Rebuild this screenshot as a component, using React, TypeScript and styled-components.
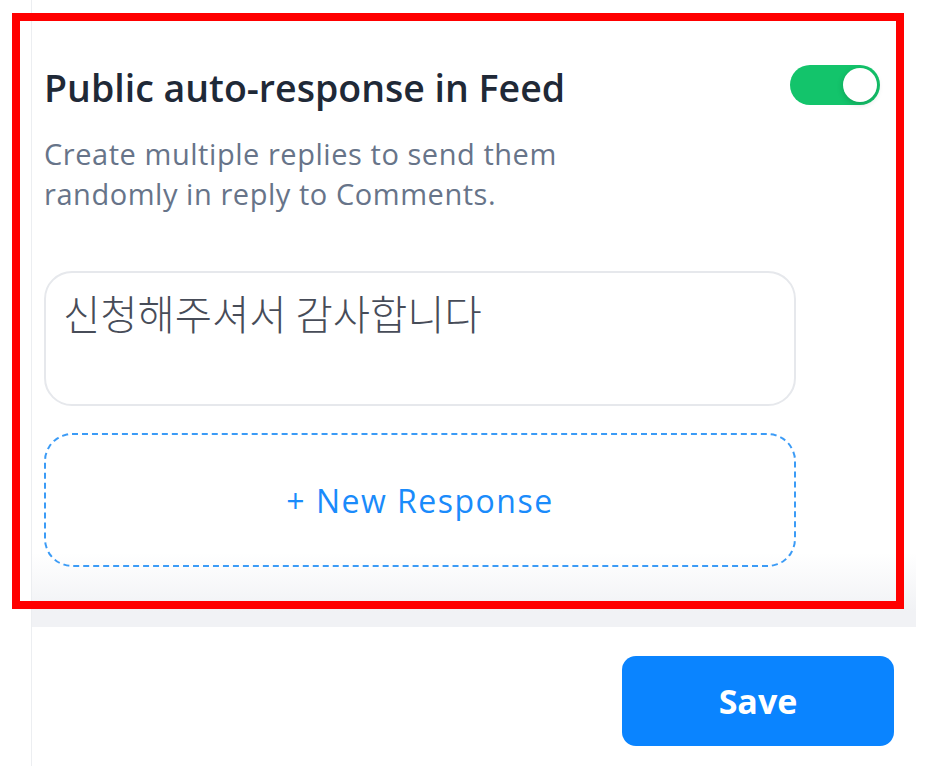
import React from "react";
import styled, { createGlobalStyle } from "styled-components";

const GlobalStyle = createGlobalStyle`
  html, body { margin: 0; padding: 0; background: #ffffff; }
  body { font-family: "Open Sans", "Noto Sans", "Noto Sans CJK KR", sans-serif; }
  #root { position: relative; width: 940px; height: 766px; overflow: hidden; }
  * { box-sizing: border-box; }
`;

const Panel = styled.div`
  margin-left: 31px;
  width: 885px;
  height: 766px;
  border-left: 1px solid #eceef1;
  display: flex;
  flex-direction: column;
`;

const Content = styled.section`
  padding: 64px 36px 60px 12px;
  background: linear-gradient(
    to bottom,
    #ffffff 0%,
    #ffffff calc(100% - 74px),
    #f1f2f5 calc(100% - 16px),
    #f1f2f5 100%
  );
`;

const HeaderRow = styled.div`
  display: flex;
  justify-content: space-between;
  align-items: flex-start;
`;

const Title = styled.h2`
  margin: 0;
  font-size: 37.5px;
  line-height: 48px;
  font-weight: 600;
  color: #1f2937;
`;

const Toggle = styled.button<{ $on: boolean }>`
  margin-top: 1px;
  width: 90px;
  height: 40px;
  border: none;
  border-radius: 20px;
  padding: 0 3px;
  background: ${(p) => (p.$on ? "#13c46b" : "#d1d5db")};
  display: flex;
  align-items: center;
  justify-content: ${(p) => (p.$on ? "flex-end" : "flex-start")};
  cursor: pointer;
`;

const Knob = styled.span`
  width: 34px;
  height: 34px;
  border-radius: 50%;
  background: #ffffff;
  box-shadow: 0 2px 6px rgba(0, 0, 0, 0.18);
`;

const Description = styled.p`
  margin: 22px 0 0;
  max-width: 590px;
  font-size: 29px;
  line-height: 40px;
  color: #677489;
  letter-spacing: 0.55px;
`;

const ResponseList = styled.div`
  margin-top: 57px;
  width: 752px;
  display: flex;
  flex-direction: column;
  gap: 27px;
`;

const ResponseInput = styled.textarea`
  display: block;
  width: 752px;
  height: 135px;
  border: 2px solid #e6e8ec;
  border-radius: 28px;
  padding: 16px 17px;
  resize: none;
  outline: none;
  background: #ffffff;
  font-family: "Noto Sans CJK KR", "Open Sans", sans-serif;
  font-size: 40.5px;
  font-weight: 300;
  line-height: 48px;
  color: #474c58;
`;

const NewResponse = styled.button`
  width: 752px;
  height: 134px;
  border: 2px dashed #3b9bf6;
  border-radius: 28px;
  background: transparent;
  display: flex;
  align-items: center;
  justify-content: center;
  font-family: "Open Sans", sans-serif;
  font-size: 32px;
  color: #1a8bfb;
  cursor: pointer;
  letter-spacing: 1.5px;
`;

const Footer = styled.footer`
  display: flex;
  justify-content: flex-end;
  padding: 29px 22px 0 0;
  background: #ffffff;
`;

const SaveButton = styled.button`
  width: 272px;
  height: 90px;
  border: none;
  border-radius: 14px;
  background: #0a84ff;
  color: #ffffff;
  font-family: "Open Sans", sans-serif;
  font-weight: 700;
  font-size: 34px;
  cursor: pointer;
`;

const Highlight = styled.div`
  position: absolute;
  left: 12px;
  top: 13px;
  width: 892px;
  height: 596px;
  border: 8px solid #ff0000;
  pointer-events: none;
`;

export default function App() {
  return (
    <>
      <GlobalStyle />
      <Panel>
        <Content>
          <HeaderRow>
            <Title>Public auto-response in Feed</Title>
            <Toggle $on aria-label="toggle">
              <Knob />
            </Toggle>
          </HeaderRow>
          <Description>
            Create multiple replies to send them randomly in reply to Comments.
          </Description>
          <ResponseList>
            <ResponseInput defaultValue="신청해주셔서 감사합니다" readOnly />
            <NewResponse>+ New Response</NewResponse>
          </ResponseList>
        </Content>
        <Footer>
          <SaveButton>Save</SaveButton>
        </Footer>
      </Panel>
      <Highlight />
    </>
  );
}
